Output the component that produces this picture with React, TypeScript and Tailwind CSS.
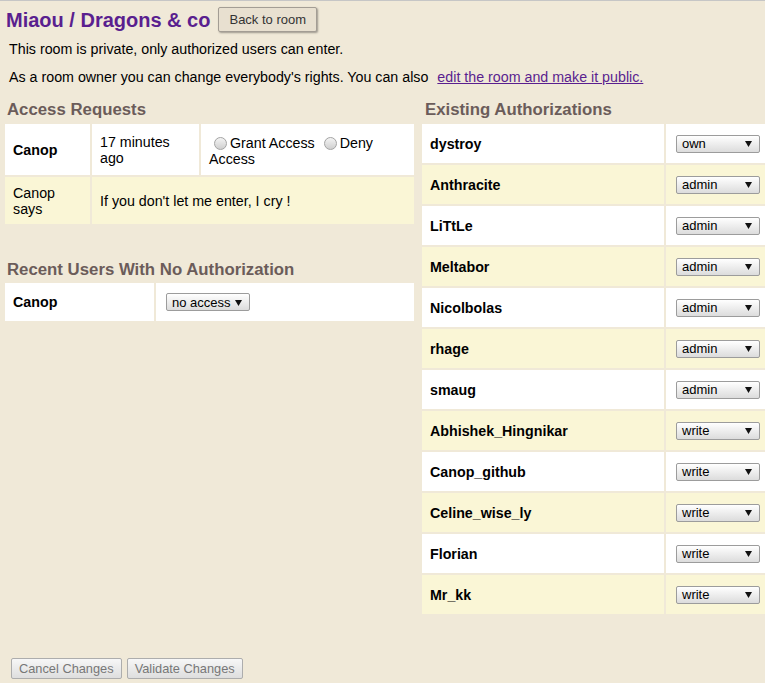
import React from "react";

const authorizations = [
  { name: "dystroy", right: "own" },
  { name: "Anthracite", right: "admin" },
  { name: "LiTtLe", right: "admin" },
  { name: "Meltabor", right: "admin" },
  { name: "Nicolbolas", right: "admin" },
  { name: "rhage", right: "admin" },
  { name: "smaug", right: "admin" },
  { name: "Abhishek_Hingnikar", right: "write" },
  { name: "Canop_github", right: "write" },
  { name: "Celine_wise_ly", right: "write" },
  { name: "Florian", right: "write" },
  { name: "Mr_kk", right: "write" },
];

function FakeSelect({ value }: { value: string }) {
  return (
    <div className="inline-flex w-[84px] h-[18px] items-center justify-between border border-[#9c9c9c] rounded-[2px] bg-gradient-to-b from-[#ffffff] to-[#dcdcdc] pl-[5px] pr-[7px] text-[13px] leading-none text-black">
      <span>{value}</span>
      <svg width="7" height="7" viewBox="0 0 7 7">
        <path d="M0 1h7L3.5 7z" fill="#111" />
      </svg>
    </div>
  );
}

function Radio() {
  return (
    <span className="inline-block align-[-2px] w-[13px] h-[13px] ml-[5px] mr-[3px] rounded-full border border-[#a3a3a3] bg-gradient-to-b from-[#f4f4f4] to-[#cfcfcf]" />
  );
}

export default function App() {
  const heading = "text-[16.8px] leading-[20px] font-bold text-[#6b5c5a] pl-[2px]";
  return (
    <div className="h-[683px] overflow-hidden flex flex-col bg-[#f0e9d8] border-t border-[#c6c6c6] font-['Liberation_Sans',Arial,sans-serif] text-[14.25px] leading-[16px] text-black">
      {/* Header */}
      <div className="flex items-center h-[25px] mt-[6px] pl-[6px]">
        <h1 className="text-[20px] font-bold text-[#5a1f8f] leading-[24px]">Miaou / Dragons &amp; co</h1>
        <button className="ml-[8px] h-[25px] px-[10px] text-[13px] text-[#333] bg-[#e8e0d0] border border-[#a39d94] rounded-[2px] shadow-[1px_1px_2px_rgba(0,0,0,0.35)]">
          Back to room
        </button>
      </div>

      <p className="mt-[9px] pl-[9px]">This room is private, only authorized users can enter.</p>
      <p className="mt-[12px] pl-[9px]">
        As a room owner you can change everybody's rights. You can also{" "}
        <a href="#" className="ml-[5px] text-[#5a1f8f] underline">edit the room and make it public.</a>
      </p>

      {/* Columns */}
      <div className="flex gap-[8px] pl-[5px] mt-[15px]">
        {/* Left */}
        <div className="w-[409px] shrink-0">
          <h2 className={heading}>Access Requests</h2>
          <div className="mt-[4px] grid grid-cols-[85px_107px_1fr] gap-[2px]">
            <div className="bg-white h-[51px] flex items-center px-[8px] font-bold">Canop</div>
            <div className="bg-white h-[51px] flex items-center px-[8px]">17 minutes ago</div>
            <div className="bg-white h-[51px] flex items-center px-[8px] pt-[2px]">
              <div>
                <Radio />
                <span>Grant Access</span> <Radio />
                <span>Deny</span> <span>Access</span>
              </div>
            </div>
            <div className="bg-[#faf6d6] h-[47px] flex items-center px-[8px]">Canop says</div>
            <div className="bg-[#faf6d6] h-[47px] flex items-center px-[8px] col-span-2">
              If you don't let me enter, I cry !
            </div>
          </div>

          <h2 className={heading + " mt-[36px]"}>Recent Users With No Authorization</h2>
          <div className="mt-[3px] grid grid-cols-[149px_1fr] gap-[2px]">
            <div className="bg-white h-[38px] flex items-center px-[8px] font-bold">Canop</div>
            <div className="bg-white h-[38px] flex items-center pl-[10px]">
              <FakeSelect value="no access" />
            </div>
          </div>
        </div>

        {/* Right */}
        <div className="flex-1">
          <h2 className={heading + " pl-[3px]"}>Existing Authorizations</h2>
          <div className="mt-[4px] grid grid-cols-[242px_1fr] gap-[2px]">
            {authorizations.map((a, i) => {
              const bg = i % 2 === 0 ? "bg-white" : "bg-[#faf6d6]";
              return (
                <React.Fragment key={a.name}>
                  <div className={`${bg} h-[39px] flex items-center px-[8px] font-bold`}>{a.name}</div>
                  <div className={`${bg} h-[39px] flex items-center pl-[10px]`}>
                    <FakeSelect value={a.right} />
                  </div>
                </React.Fragment>
              );
            })}
          </div>
        </div>
      </div>

      {/* Footer buttons */}
      <div className="mt-auto mb-[4px] pl-[11px] flex gap-[5px]">
        <button className="h-[21px] px-[7px] text-[12.8px] text-[#777] bg-gradient-to-b from-[#f7f7f7] to-[#dedede] border border-[#adadad] rounded-[2px]">
          Cancel Changes
        </button>
        <button className="h-[21px] px-[7px] text-[12.8px] text-[#777] bg-gradient-to-b from-[#f7f7f7] to-[#dedede] border border-[#adadad] rounded-[2px]">
          Validate Changes
        </button>
      </div>
    </div>
  );
}
